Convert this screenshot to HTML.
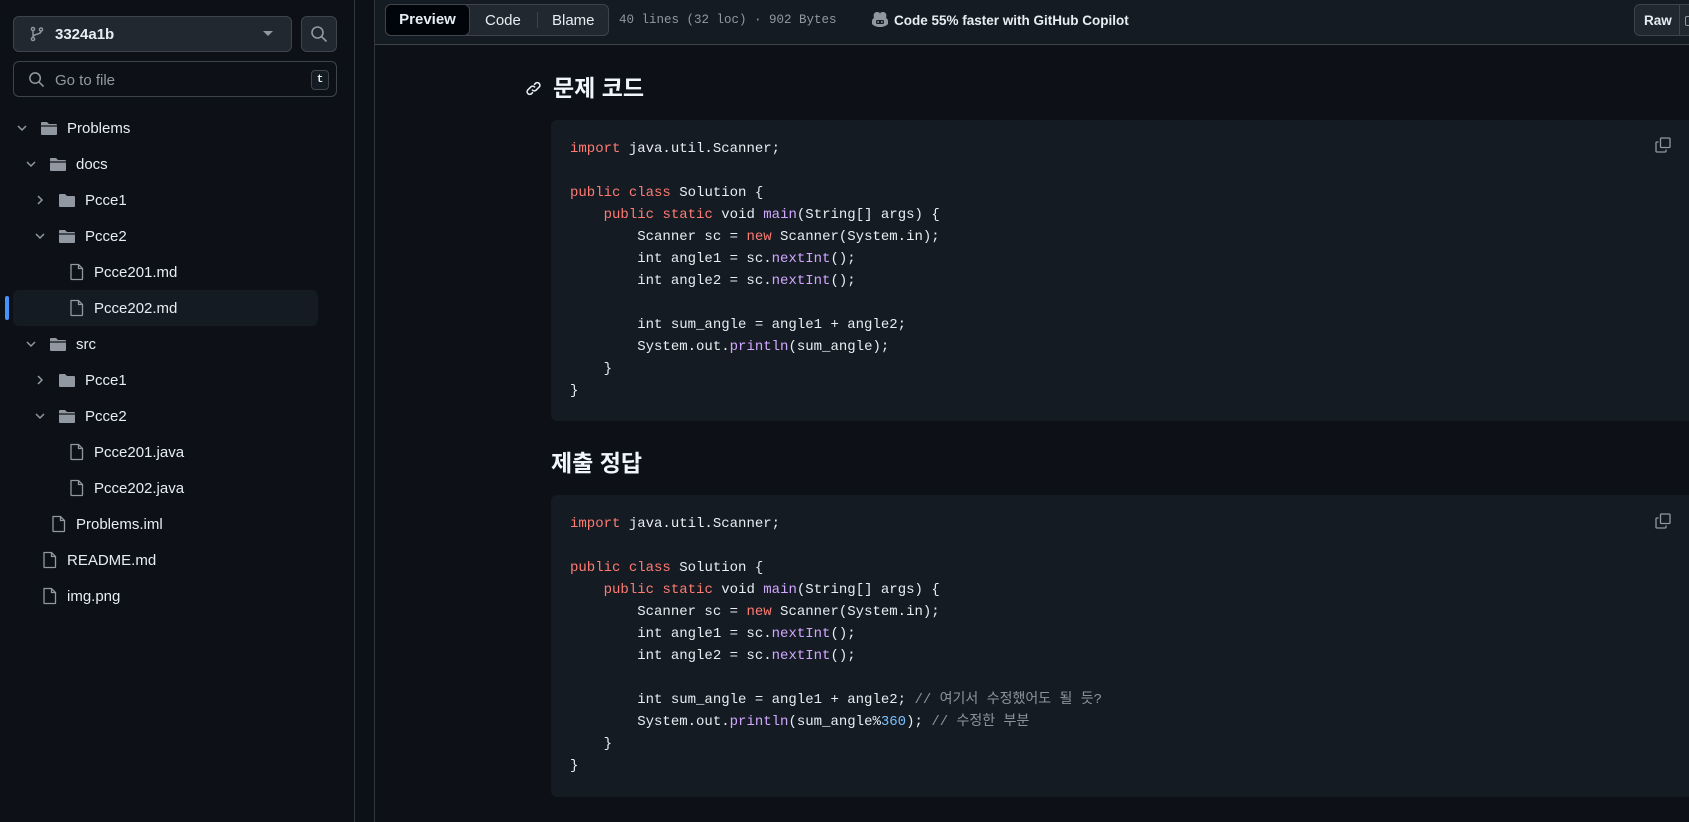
<!DOCTYPE html>
<html><head><meta charset="utf-8"><style>
*{box-sizing:border-box;margin:0;padding:0}
body{width:1689px;height:822px;background:#0d1117;color:#e6edf3;font-family:"Liberation Sans","Noto Sans CJK KR",sans-serif;position:relative;overflow:hidden}
.a{position:absolute}
.row{position:absolute;height:36px;display:flex;align-items:center;font-size:15px;color:#e6edf3;white-space:nowrap}
.row svg{flex:none}
.code{position:absolute;left:551px;right:0;background:#151b23;border-radius:6px 0 0 6px}
pre{position:absolute;left:19px;font-family:"Liberation Mono","Noto Sans CJK KR",monospace;font-size:14px;line-height:22px;color:#e6edf3}
.k{color:#ff7b72}.f{color:#d2a8ff}.n{color:#79c0ff}.c{color:#8b949e}
h2{position:absolute;font-size:23px;font-weight:bold;color:#f0f6fc;line-height:30px}
</style></head><body>
<!-- sidebar -->
<div class="a" style="left:354px;top:0;width:1px;height:822px;background:#30363d"></div>
<div class="a" style="left:374px;top:0;width:1px;height:822px;background:#30363d"></div>
<div class="a" style="left:13px;top:16px;width:279px;height:36px;background:#212830;border:1px solid #3d444d;border-radius:6px"></div>
<svg class="a" style="left:29px;top:26px" width="16" height="16" viewBox="0 0 16 16" fill="none" stroke="#9198a1" stroke-width="1.4"><circle cx="4" cy="3" r="1.6"/><circle cx="4" cy="13" r="1.6"/><circle cx="12" cy="3.5" r="1.6"/><path d="M4 4.6v6.8M12 5.1c0 4-8 2.5-8 6"/></svg>
<div class="a" style="left:55px;top:26px;font-size:15px;font-weight:bold">3324a1b</div>
<svg class="a" style="left:263px;top:31px" width="10" height="6"><path d="M0 0h10L5 5z" fill="#9198a1"/></svg>
<div class="a" style="left:301px;top:16px;width:36px;height:36px;background:#212830;border:1px solid #3d444d;border-radius:6px"></div>
<svg class="a" style="left:310px;top:25px" width="18" height="18" viewBox="0 0 18 18" fill="none" stroke="#9198a1" stroke-width="1.6"><circle cx="7.5" cy="7.5" r="5.5"/><path d="M11.5 11.5l5 5"/></svg>
<div class="a" style="left:13px;top:61px;width:324px;height:36px;border:1px solid #3d444d;border-radius:6px"></div>
<svg class="a" style="left:28px;top:71px" width="17" height="17" viewBox="0 0 18 18" fill="none" stroke="#9198a1" stroke-width="1.6"><circle cx="7.5" cy="7.5" r="5.5"/><path d="M11.5 11.5l5 5"/></svg>
<div class="a" style="left:55px;top:72px;font-size:15px;color:#9198a1">Go to file</div>
<div class="a" style="left:311px;top:70px;width:18px;height:20px;border:1px solid #3d444d;border-radius:4px;background:#151b23;font-family:'Liberation Mono',monospace;font-size:11px;font-weight:bold;text-align:center;line-height:18px">t</div>
<div class="a" style="left:13px;top:290px;width:305px;height:36px;background:#151b23;border-radius:6px"></div>
<div class="a" style="left:5px;top:296px;width:4px;height:24px;background:#4493f8;border-radius:2px"></div>

<!-- tree rows -->
<div class="row" style="left:16px;top:110px"><svg width="12" height="12"><path d="M2 4l4 4 4-4" stroke="#9198a1" stroke-width="1.5" fill="none"/></svg><svg style="margin-left:12px" width="18" height="16"><path d="M1 3a1 1 0 0 1 1-1h5l2 2h7a1 1 0 0 1 1 1v9a1 1 0 0 1-1 1H2a1 1 0 0 1-1-1z" fill="#9198a1"/><path d="M1 6h16" stroke="#0d1117" stroke-width="1.2"/></svg><span style="margin-left:9px">Problems</span></div>
<div class="row" style="left:25px;top:146px"><svg width="12" height="12"><path d="M2 4l4 4 4-4" stroke="#9198a1" stroke-width="1.5" fill="none"/></svg><svg style="margin-left:12px" width="18" height="16"><path d="M1 3a1 1 0 0 1 1-1h5l2 2h7a1 1 0 0 1 1 1v9a1 1 0 0 1-1 1H2a1 1 0 0 1-1-1z" fill="#9198a1"/><path d="M1 6h16" stroke="#0d1117" stroke-width="1.2"/></svg><span style="margin-left:9px">docs</span></div>
<div class="row" style="left:34px;top:182px"><svg width="12" height="12"><path d="M4 2l4 4-4 4" stroke="#9198a1" stroke-width="1.5" fill="none"/></svg><svg style="margin-left:12px" width="18" height="16"><path d="M1 3a1 1 0 0 1 1-1h5l2 2h7a1 1 0 0 1 1 1v9a1 1 0 0 1-1 1H2a1 1 0 0 1-1-1z" fill="#9198a1"/></svg><span style="margin-left:9px">Pcce1</span></div>
<div class="row" style="left:34px;top:218px"><svg width="12" height="12"><path d="M2 4l4 4 4-4" stroke="#9198a1" stroke-width="1.5" fill="none"/></svg><svg style="margin-left:12px" width="18" height="16"><path d="M1 3a1 1 0 0 1 1-1h5l2 2h7a1 1 0 0 1 1 1v9a1 1 0 0 1-1 1H2a1 1 0 0 1-1-1z" fill="#9198a1"/><path d="M1 6h16" stroke="#0d1117" stroke-width="1.2"/></svg><span style="margin-left:9px">Pcce2</span></div>
<div class="row" style="left:69px;top:254px"><svg width="16" height="18"><path d="M2 1.5h7.5l4 4V16a.5.5 0 0 1-.5.5H2.5A.5.5 0 0 1 2 16z M9.5 1.5v4h4" stroke="#9198a1" stroke-width="1.3" fill="none"/></svg><span style="margin-left:9px">Pcce201.md</span></div>
<div class="row" style="left:69px;top:290px"><svg width="16" height="18"><path d="M2 1.5h7.5l4 4V16a.5.5 0 0 1-.5.5H2.5A.5.5 0 0 1 2 16z M9.5 1.5v4h4" stroke="#9198a1" stroke-width="1.3" fill="none"/></svg><span style="margin-left:9px">Pcce202.md</span></div>
<div class="row" style="left:25px;top:326px"><svg width="12" height="12"><path d="M2 4l4 4 4-4" stroke="#9198a1" stroke-width="1.5" fill="none"/></svg><svg style="margin-left:12px" width="18" height="16"><path d="M1 3a1 1 0 0 1 1-1h5l2 2h7a1 1 0 0 1 1 1v9a1 1 0 0 1-1 1H2a1 1 0 0 1-1-1z" fill="#9198a1"/><path d="M1 6h16" stroke="#0d1117" stroke-width="1.2"/></svg><span style="margin-left:9px">src</span></div>
<div class="row" style="left:34px;top:362px"><svg width="12" height="12"><path d="M4 2l4 4-4 4" stroke="#9198a1" stroke-width="1.5" fill="none"/></svg><svg style="margin-left:12px" width="18" height="16"><path d="M1 3a1 1 0 0 1 1-1h5l2 2h7a1 1 0 0 1 1 1v9a1 1 0 0 1-1 1H2a1 1 0 0 1-1-1z" fill="#9198a1"/></svg><span style="margin-left:9px">Pcce1</span></div>
<div class="row" style="left:34px;top:398px"><svg width="12" height="12"><path d="M2 4l4 4 4-4" stroke="#9198a1" stroke-width="1.5" fill="none"/></svg><svg style="margin-left:12px" width="18" height="16"><path d="M1 3a1 1 0 0 1 1-1h5l2 2h7a1 1 0 0 1 1 1v9a1 1 0 0 1-1 1H2a1 1 0 0 1-1-1z" fill="#9198a1"/><path d="M1 6h16" stroke="#0d1117" stroke-width="1.2"/></svg><span style="margin-left:9px">Pcce2</span></div>
<div class="row" style="left:69px;top:434px"><svg width="16" height="18"><path d="M2 1.5h7.5l4 4V16a.5.5 0 0 1-.5.5H2.5A.5.5 0 0 1 2 16z M9.5 1.5v4h4" stroke="#9198a1" stroke-width="1.3" fill="none"/></svg><span style="margin-left:9px">Pcce201.java</span></div>
<div class="row" style="left:69px;top:470px"><svg width="16" height="18"><path d="M2 1.5h7.5l4 4V16a.5.5 0 0 1-.5.5H2.5A.5.5 0 0 1 2 16z M9.5 1.5v4h4" stroke="#9198a1" stroke-width="1.3" fill="none"/></svg><span style="margin-left:9px">Pcce202.java</span></div>
<div class="row" style="left:51px;top:506px"><svg width="16" height="18"><path d="M2 1.5h7.5l4 4V16a.5.5 0 0 1-.5.5H2.5A.5.5 0 0 1 2 16z M9.5 1.5v4h4" stroke="#9198a1" stroke-width="1.3" fill="none"/></svg><span style="margin-left:9px">Problems.iml</span></div>
<div class="row" style="left:42px;top:542px"><svg width="16" height="18"><path d="M2 1.5h7.5l4 4V16a.5.5 0 0 1-.5.5H2.5A.5.5 0 0 1 2 16z M9.5 1.5v4h4" stroke="#9198a1" stroke-width="1.3" fill="none"/></svg><span style="margin-left:9px">README.md</span></div>
<div class="row" style="left:42px;top:578px"><svg width="16" height="18"><path d="M2 1.5h7.5l4 4V16a.5.5 0 0 1-.5.5H2.5A.5.5 0 0 1 2 16z M9.5 1.5v4h4" stroke="#9198a1" stroke-width="1.3" fill="none"/></svg><span style="margin-left:9px">img.png</span></div>

<!-- header -->
<div class="a" style="left:375px;top:0;right:0;height:45px;background:#151b23;border-bottom:1px solid #3d444d"></div>
<div class="a" style="left:385px;top:4px;width:224px;height:32px;background:#212830;border:1px solid #3d444d;border-radius:6px"></div>
<div class="a" style="left:385px;top:4px;width:85px;height:32px;background:#010409;border:1px solid #3d444d;border-radius:6px;font-size:15px;font-weight:bold;text-align:center;line-height:30px">Preview</div>
<div class="a" style="left:485px;top:12px;font-size:15px">Code</div>
<div class="a" style="left:537px;top:12px;width:1px;height:16px;background:#3d444d"></div>
<div class="a" style="left:552px;top:12px;font-size:15px">Blame</div>
<div class="a" style="left:619px;top:13px;font-family:'Liberation Mono',monospace;font-size:12.5px;color:#9198a1">40 lines (32 loc) · 902 Bytes</div>
<svg class="a" style="left:871px;top:11px" width="18" height="17" viewBox="0 0 18 17"><path d="M3 7c-1-3 0-6 3-6 2 0 3 1 3 2 0-1 1-2 3-2 3 0 4 3 3 6 1 .5 2 1.5 2 3v3c-2 2-5 3-8 3s-6-1-8-3v-3c0-1.5 1-2.5 2-3z" fill="#9198a1"/><rect x="5" y="9" width="8" height="4" rx="1.5" fill="#151b23"/><rect x="6.5" y="10" width="1.3" height="2" fill="#9198a1"/><rect x="10.2" y="10" width="1.3" height="2" fill="#9198a1"/></svg>
<div class="a" style="left:894px;top:13px;font-size:13.5px;font-weight:bold">Code 55% faster with GitHub Copilot</div>
<div class="a" style="left:1634px;top:4px;width:70px;height:32px;background:#212830;border:1px solid #3d444d;border-radius:6px"></div>
<div class="a" style="left:1644px;top:13px;font-size:13.5px;font-weight:bold">Raw</div>
<div class="a" style="left:1679px;top:5px;width:1px;height:30px;background:#3d444d"></div>
<div class="a" style="left:1685px;top:16px;width:8px;height:10px;border:1.3px solid #9198a1;border-radius:2px"></div>

<!-- content -->
<svg class="a" style="left:525px;top:80px" width="17" height="17" viewBox="0 0 16 16" fill="none" stroke="#e6edf3" stroke-width="1.5" stroke-linecap="round"><path d="M7 9.5a2.5 2.5 0 0 0 3.5 0l3-3a2.5 2.5 0 0 0-3.5-3.5l-1 1"/><path d="M9 6.5a2.5 2.5 0 0 0-3.5 0l-3 3a2.5 2.5 0 0 0 3.5 3.5l1-1"/></svg>
<h2 style="left:553px;top:73px">문제 코드</h2>
<div class="code" style="top:120px;height:301px">
<svg class="a" style="right:18px;top:17px" width="16" height="16" viewBox="0 0 16 16" fill="none" stroke="#9198a1" stroke-width="1.3"><rect x="5.5" y="1" width="9.5" height="9.5" rx="1"/><path d="M3.5 5H2a1 1 0 0 0-1 1v8a1 1 0 0 0 1 1h8a1 1 0 0 0 1-1v-1.5"/></svg>
<pre style="top:18px"><span class="k">import</span> java.util.Scanner;

<span class="k">public</span> <span class="k">class</span> Solution {
    <span class="k">public</span> <span class="k">static</span> void <span class="f">main</span>(String[] args) {
        Scanner sc = <span class="k">new</span> Scanner(System.in);
        int angle1 = sc.<span class="f">nextInt</span>();
        int angle2 = sc.<span class="f">nextInt</span>();

        int sum_angle = angle1 + angle2;
        System.out.<span class="f">println</span>(sum_angle);
    }
}</pre>
</div>
<h2 style="left:551px;top:448px">제출 정답</h2>
<div class="code" style="top:495px;height:302px">
<svg class="a" style="right:18px;top:18px" width="16" height="16" viewBox="0 0 16 16" fill="none" stroke="#9198a1" stroke-width="1.3"><rect x="5.5" y="1" width="9.5" height="9.5" rx="1"/><path d="M3.5 5H2a1 1 0 0 0-1 1v8a1 1 0 0 0 1 1h8a1 1 0 0 0 1-1v-1.5"/></svg>
<pre style="top:18px"><span class="k">import</span> java.util.Scanner;

<span class="k">public</span> <span class="k">class</span> Solution {
    <span class="k">public</span> <span class="k">static</span> void <span class="f">main</span>(String[] args) {
        Scanner sc = <span class="k">new</span> Scanner(System.in);
        int angle1 = sc.<span class="f">nextInt</span>();
        int angle2 = sc.<span class="f">nextInt</span>();

        int sum_angle = angle1 + angle2; <span class="c">// 여기서 수정했어도 될 듯?</span>
        System.out.<span class="f">println</span>(sum_angle%<span class="n">360</span>); <span class="c">// 수정한 부분</span>
    }
}</pre>
</div>
</body></html>
